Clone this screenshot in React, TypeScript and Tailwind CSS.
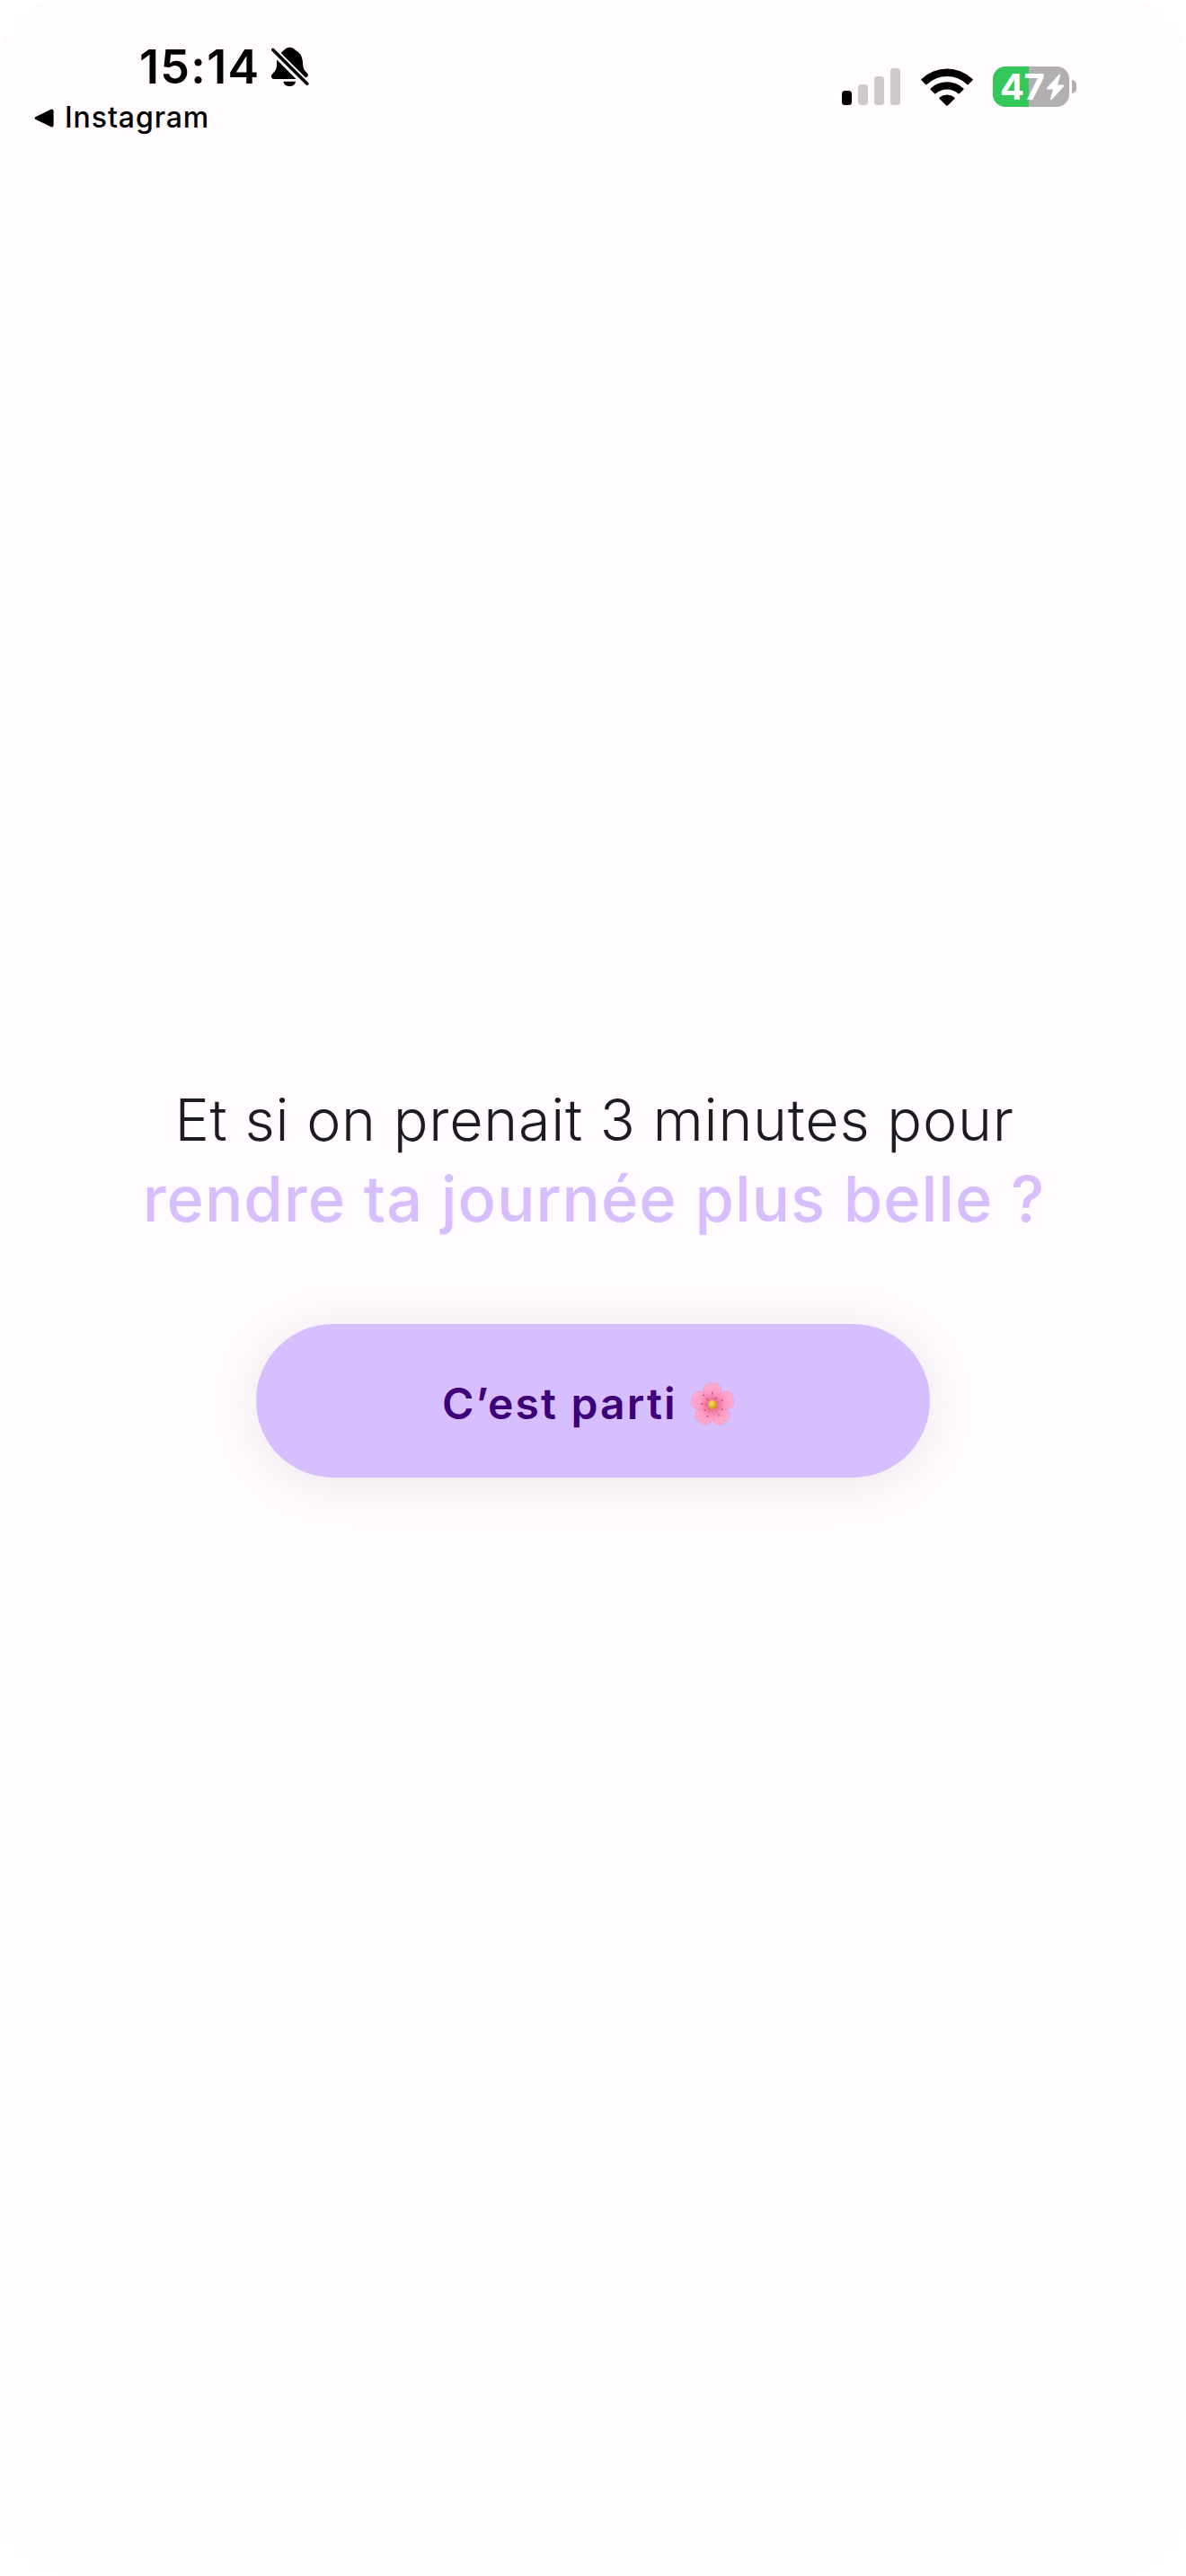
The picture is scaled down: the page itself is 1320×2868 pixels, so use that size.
const STAMENS = [
  [14, 14.3],
  [23.7, 11.7],
  [34.7, 20],
  [35, 30.3],
  [31, 37],
  [18.3, 37.7],
  [15.3, 31.3],
  [12.3, 24],
  [18.3, 19],
  [27.7, 17.7],
];

function BellOff() {
  return (
    <svg className="h-[44px] w-[42px] shrink-0" viewBox="0 0 42 44">
      <path
        d="M20.5 0.8C16 0.8 14.8 3.8 12.9 4.9C11.6 5.7 10.4 6.9 9.6 8.2L36 34.4C38.6 34.9 41 33.6 40.9 31.6C40.7 28.8 36.6 27.6 35.6 23C34.9 19.8 35.3 15.4 33.7 11.2C32.3 7.7 30 5.7 28.1 4.8C26.2 3.8 25 0.8 20.5 0.8Z"
        fill="black"
      />
      <path
        d="M6.2 14.4L27.5 36H3.2C0.9 36 0 34.5 0 32.9C0 29.9 4.4 28.3 5.5 24C6.2 21.3 5.9 17.8 6.2 14.4Z"
        fill="black"
      />
      <path d="M13.4 38.7H27C26.6 42 23.8 44 20.3 44C16.8 44 13.8 42 13.4 38.7Z" fill="black" />
      <path d="M1.8 3.5L39.8 41.2" stroke="#fffbff" strokeWidth="7.4" />
      <path d="M1.8 3.5L39.8 41.2" stroke="black" strokeWidth="3.6" strokeLinecap="round" />
    </svg>
  );
}

function Signal() {
  return (
    <div className="flex h-[41px] items-end gap-[7px]">
      <div className="h-4 w-[11px] rounded-[3.5px] bg-black" />
      <div className="h-[23px] w-[11px] rounded-[3.5px] bg-[#ccc8cc]" />
      <div className="h-8 w-[11px] rounded-[3.5px] bg-[#ccc8cc]" />
      <div className="h-[41px] w-[11px] rounded-[3.5px] bg-[#ccc8cc]" />
    </div>
  );
}

function Wifi() {
  return (
    <svg className="h-[42px] w-[58px]" viewBox="0 0 58 42">
      <path
        d="M0.6 12A41 41 0 0 1 57.4 12Q58 12.7 57.4 13.4L52.8 17.9Q52 18.5 51.2 17.9A32.3 32.3 0 0 0 6.8 17.9Q6 18.5 5.2 17.9L0.6 13.4Q0 12.7 0.6 12Z"
        fill="black"
      />
      <path
        d="M10.6 22.4A27 27 0 0 1 47.4 22.4Q48 23.1 47.4 23.8L42.8 28.2Q42 28.8 41.2 28.1A18.6 18.6 0 0 0 16.8 28.1Q16 28.8 15.2 28.2L10.6 23.8Q10 23.1 10.6 22.4Z"
        fill="black"
      />
      <path d="M20.7 32.5A12.6 12.6 0 0 1 37.3 32.5Q38 33.2 37.4 33.9L29.7 41.5Q29 42.1 28.3 41.5L20.6 33.9Q20 33.2 20.7 32.5Z" fill="black" />
    </svg>
  );
}

function Battery() {
  return (
    <div className="flex items-center gap-[3px]">
      <div className="flex h-[45px] w-[85px] items-center rounded-[14px] bg-[linear-gradient(to_right,#34c759_40px,#b2afb2_40px)] pl-[8px]">
        <span className="w-[51px] text-[40px] leading-[45px] font-bold tracking-[-0.5px] whitespace-nowrap text-white">47</span>
        <svg className="h-[30px] w-[21px] shrink-0" viewBox="0 0 21 30">
          <path
            d="M14.6 1L1.2 15.8Q0.5 17.2 1.8 17.4H8.2L5 28Q5 29.8 6.6 29L20 14.2Q20.8 12.8 19.4 12.6H13L16.2 2Q16.2 0.2 14.6 1Z"
            fill="white"
          />
        </svg>
      </div>
      <div className="h-[15px] w-[5px] rounded-r-full bg-[#b2afb2]" />
    </div>
  );
}

function Flower() {
  return (
    <svg className="h-[49px] w-[49px] shrink-0" viewBox="0 0 49 49" role="img" aria-label="🌸">
      <defs>
        <radialGradient id="petal" gradientUnits="userSpaceOnUse" cx="24" cy="25" r="25">
          <stop offset="0" stopColor="#dc4a76" />
          <stop offset="0.3" stopColor="#ee7ba3" />
          <stop offset="0.55" stopColor="#fd9ac4" />
          <stop offset="1" stopColor="#ffb0d0" />
        </radialGradient>
        <radialGradient id="heart" cx="0.4" cy="0.35" r="0.7">
          <stop offset="0" stopColor="#fbdf62" />
          <stop offset="1" stopColor="#c98c22" />
        </radialGradient>
      </defs>
      {[0, 72, 144, 216, 288].map((a) => (
        <path
          key={a}
          transform={`rotate(${a} 24 25)`}
          d="M24 25C19.5 21 14.2 15.5 14.2 9C14.4 4.8 17 1.4 21.6 0.8L24 2.6L26.4 0.8C31 1.4 33.6 4.8 33.8 9C33.8 15.5 28.5 21 24 25Z"
          fill="url(#petal)"
          stroke="#ee85ae"
          strokeWidth="0.5"
        />
      ))}
      {STAMENS.map(([x, y]) => (
        <g key={`${x}-${y}`}>
          <path d={`M24 25L${x} ${y}`} stroke="#e2638f" strokeWidth="0.35" />
          <circle cx={x} cy={y} r="0.75" fill="#a5305c" />
        </g>
      ))}
      <circle cx="24" cy="25" r="5.2" fill="url(#heart)" />
    </svg>
  );
}

export default function App() {
  return (
    <div className="h-[2868px] w-[1320px] bg-white font-['Inter',sans-serif]">
      <div className="flex h-full flex-col rounded-[66px] bg-[#fffbff]">
        <header className="flex h-[160px] items-start justify-between pr-[122px] pl-[38px]">
          <div className="flex flex-col pt-[49px]">
            <div className="flex h-[52px] items-start pl-[117px]">
              <span className="w-[147px] text-[52px] leading-[52px] font-semibold tracking-[1.3px] whitespace-nowrap">15:14</span>
              <div className="pt-[3px]">
                <BellOff />
              </div>
            </div>
            <div className="mt-[10px] flex h-10 items-center">
              <svg className="mr-[12px] h-[21px] w-[22px]" viewBox="0 0 22 21">
                <path d="M1.3 9.2L18.8 0.7Q21.4 0 21.6 2.6V18.4Q21.4 21 18.8 20.3L1.3 11.8Q-0.2 10.5 1.3 9.2Z" fill="black" />
              </svg>
              <span className="text-[32px] leading-10 font-medium tracking-[0.9px]">Instagram</span>
            </div>
          </div>
          <div className="flex items-center pt-[74px]">
            <Signal />
            <div className="w-[23px]" />
            <Wifi />
            <div className="w-[22px]" />
            <Battery />
          </div>
        </header>
        <main className="flex flex-col items-center pt-[1043px]">
          <h1 className="flex flex-col items-center whitespace-nowrap">
            <span className="pl-[3px] text-[64.5px] leading-[88px] font-light tracking-[0.75px] text-[#1c1b1f]">
              Et si on prenait 3 minutes pour
            </span>
            <span className="pl-[2px] text-[70.5px] leading-[88px] font-medium tracking-[0.95px] text-[#d7bfff]">
              rendre ta journée plus belle ?
            </span>
          </h1>
          <button className="mt-[95px] flex h-[171px] w-[750px] items-center rounded-full bg-[#d7bfff] pt-[7px] pl-[207px] text-[#3e0079] shadow-[0_5px_60px_rgba(0,0,0,0.09)]">
            <span className="w-[277px] text-left text-[48px] leading-[60px] font-[570] tracking-[2.2px] whitespace-nowrap">
              C’est parti
            </span>
            <Flower />
          </button>
        </main>
      </div>
    </div>
  );
}
